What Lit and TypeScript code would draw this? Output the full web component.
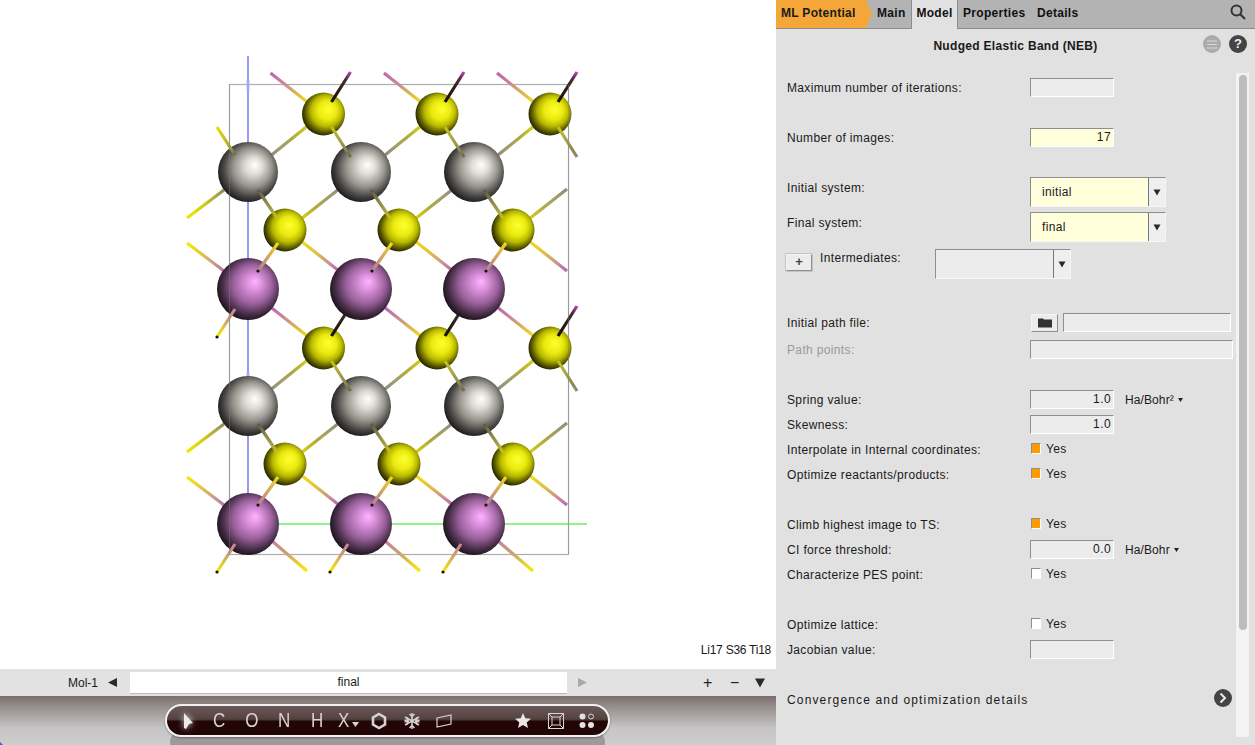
import { LitElement, html, css, svg } from "lit";
import { customElement } from "lit/decorators.js";

type Pt = [number, number];
type Bond = { a: Pt; b: Pt; stops: string[]; dot?: boolean };

const Y_P = ["#f0e010", "#e0c040", "#c89090", "#c060b8"];
const P_Y = ["#c87fa0", "#c8a070", "#e8d030", "#f5ea00"];
const OLIVE = ["#d8d010", "#b0aa40", "#a09c70", "#8f8c78"];
const OLIVE_IN = ["#c8c018", "#a8a448", "#8c8850", "#6a6848"];
const DARK = ["#14100a", "#2a1c10", "#4a2c30", "#c040c0"];

const cols = [0, 1, 2];
const rows = [0, 1];
const atomX = (i: number) => 248 + 113 * i;
const ax = (i: number) => [323.5, 437, 550][i];
const bx = (i: number) => [285, 399, 513][i];
const ay = (j: number) => [114, 348][j];
const by = (j: number) => [230, 464][j];
const gy = (j: number) => [172, 406][j];
const py = (j: number) => [289, 524][j];

const off = (p: Pt, dx: number, dy: number): Pt => [p[0] + dx, p[1] + dy];

function backBonds(): Bond[] {
  const out: Bond[] = [];
  for (const j of rows) {
    out.push({ a: [187, by(j) - 12], b: [224, by(j) - 40], stops: ["#f0e800", "#d8d010", "#b0aa40", "#8f8c60"] });
    out.push({ a: [187, by(j) + 13], b: [224, by(j) + 41], stops: ["#f5ea00", "#e0c840", "#c89890", "#b87898"] });
    for (const i of cols) {
      const A: Pt = [ax(i), ay(j)];
      const B: Pt = [bx(i), by(j)];
      out.push({ a: off(A, -53, -41), b: off(A, -15, -11), stops: [...Y_P].reverse() });
      out.push({ a: off(A, -16, 12), b: off(A, -52, 41), stops: OLIVE });
      out.push({ a: off(B, 16, -11), b: off(B, 54, -41), stops: OLIVE });
      out.push({ a: off(B, 16, 11), b: off(B, 54, 41), stops: Y_P });
    }
  }
  for (const i of cols) {
    const P: Pt = [atomX(i), py(1)];
    out.push({ a: off(P, 24, 17), b: off(P, 59, 47), stops: P_Y });
  }
  return out;
}

function overYellow(): Bond[] {
  const out: Bond[] = [];
  for (const j of rows) {
    for (const i of cols) {
      const A: Pt = [ax(i), ay(j)];
      out.push({ a: off(A, 8, -12), b: off(A, 27, -42), stops: DARK });
    }
  }
  return out;
}

function frontBonds(): Bond[] {
  const out: Bond[] = [];
  out.push({ a: [217, 127], b: [235, 155], stops: ["#e8e000", "#c8c020", "#a0a040", "#6a6848"] });
  for (const j of rows) {
    for (const i of cols) {
      const A: Pt = [ax(i), ay(j)];
      const B: Pt = [bx(i), by(j)];
      const G: Pt = [atomX(i), gy(j)];
      out.push({ a: off(A, 8, 13), b: off(A, 27, 43), stops: OLIVE_IN.map((c, k) => (i === 2 && k === 3 ? "#8f8c78" : c)) });
      out.push({ a: off(G, 10, 18), b: off(G, 29, 46), stops: ["#5a5840", "#8a8650", "#a8a440", "#c8c018"] });
      out.push({ a: off(B, -7, 13), b: off(B, -27, 41), stops: ["#f0d820", "#d8b050", "#c09080", "#b87f98"], dot: true });
    }
  }
  out.push({ a: [235, 309], b: [217, 337], stops: P_Y, dot: true });
  for (const i of cols) {
    const P: Pt = [atomX(i), py(1)];
    out.push({ a: off(P, -13, 20), b: off(P, -31, 48), stops: P_Y, dot: true });
  }
  return out;
}

let gid = 0;
function bondSvg(list: Bond[]) {
  return list.map((b) => {
    const id = `bd${gid++}`;
    return svg`
      <linearGradient id=${id} gradientUnits="userSpaceOnUse" x1=${b.a[0]} y1=${b.a[1]} x2=${b.b[0]} y2=${b.b[1]}>
        <stop offset="0" stop-color=${b.stops[0]}></stop>
        <stop offset=".4" stop-color=${b.stops[1]}></stop>
        <stop offset=".75" stop-color=${b.stops[2]}></stop>
        <stop offset="1" stop-color=${b.stops[3]}></stop>
      </linearGradient>
      <line x1=${b.a[0]} y1=${b.a[1]} x2=${b.b[0]} y2=${b.b[1]} stroke=${`url(#${id})`} stroke-width="3.2"></line>
      ${b.dot ? svg`<circle cx=${b.b[0]} cy=${b.b[1]} r="1.6" fill="#1a1210"></circle>` : null}
    `;
  });
}

function molecule() {
  gid = 0;
  const yellows: Pt[] = [];
  const greys: Pt[] = [];
  const purples: Pt[] = [];
  for (const j of rows) {
    for (const i of cols) {
      yellows.push([ax(i), ay(j)], [bx(i), by(j)]);
      greys.push([atomX(i), gy(j)]);
      purples.push([atomX(i), py(j)]);
    }
  }
  return html`<svg class="mol" width="776" height="669" viewBox="0 0 776 669">
    <defs>
      <radialGradient id="gy" cx=".54" cy=".46" r=".58" fx=".62" fy=".38">
        <stop offset="0" stop-color="#ffff30"></stop>
        <stop offset=".38" stop-color="#eaea10"></stop>
        <stop offset=".62" stop-color="#b8b800"></stop>
        <stop offset=".82" stop-color="#5c5c00"></stop>
        <stop offset="1" stop-color="#121200"></stop>
      </radialGradient>
      <radialGradient id="gg" cx=".54" cy=".46" r=".58" fx=".62" fy=".38">
        <stop offset="0" stop-color="#fffffb"></stop>
        <stop offset=".25" stop-color="#dedbd6"></stop>
        <stop offset=".55" stop-color="#98958f"></stop>
        <stop offset=".8" stop-color="#484644"></stop>
        <stop offset="1" stop-color="#121212"></stop>
      </radialGradient>
      <radialGradient id="gp" cx=".54" cy=".46" r=".58" fx=".62" fy=".38">
        <stop offset="0" stop-color="#ffb4ff"></stop>
        <stop offset=".25" stop-color="#d68cd6"></stop>
        <stop offset=".55" stop-color="#98609a"></stop>
        <stop offset=".8" stop-color="#482e48"></stop>
        <stop offset="1" stop-color="#100c10"></stop>
      </radialGradient>
    </defs>
    <rect class="cell" x="229.5" y="84.5" width="339" height="470"></rect>
    <line class="axis-z" x1="248" y1="56" x2="248" y2="524"></line>
    <line class="axis-glow" x1="248" y1="80" x2="248" y2="90"></line>
    <line class="axis-glow" x1="248" y1="372" x2="248" y2="382"></line>
    <line class="axis-y" x1="248" y1="524" x2="587" y2="524"></line>
    ${bondSvg(backBonds())}
    ${yellows.map((p) => svg`<circle cx=${p[0]} cy=${p[1]} r="21.5" fill="url(#gy)"></circle>`)}
    ${bondSvg(overYellow())}
    ${greys.map((p) => svg`<circle cx=${p[0]} cy=${p[1]} r="30" fill="url(#gg)"></circle>`)}
    ${purples.map((p) => svg`<circle cx=${p[0]} cy=${p[1]} r="31" fill="url(#gp)"></circle>`)}
    ${bondSvg(frontBonds())}
    <line class="cell-over" x1="229.5" y1="84.5" x2="229.5" y2="554"></line>
    <line class="cell-over" x1="568.5" y1="84.5" x2="568.5" y2="554"></line>
  </svg>`;
}

const arrowDown = html`<svg class="tri" width="8" height="7" viewBox="0 0 8 7"><path d="M.5 .5h7L4 6.500z"></path></svg>`;

@customElement("app-root")
export class AppRoot extends LitElement {
  static styles = css`
    :host {
      display: flex;
      width: 1255px;
      height: 745px;
      overflow: hidden;
      font-family: "Liberation Sans", Arial, sans-serif;
      font-size: 12px;
      color: #1a1a1a;
    }
    .left {
      width: 776px;
      display: flex;
      flex-direction: column;
    }
    .canvas {
      position: relative;
      height: 669px;
      background: #fff;
    }
    .mol {
      display: block;
    }
    .cell {
      fill: none;
      stroke: #adadad;
      stroke-width: 1.2;
    }
    .cell-over {
      stroke: #808080;
      stroke-width: 1;
      opacity: 0.4;
    }
    .axis-z {
      stroke: #6e6ef0;
      stroke-width: 1.4;
    }
    .axis-glow {
      stroke: #b8b8f8;
      stroke-width: 4;
      opacity: 0.5;
    }
    .axis-y {
      stroke: #66f066;
      stroke-width: 1.4;
    }
    .formula {
      position: absolute;
      right: 5px;
      bottom: 12px;
      font-size: 12px;
      letter-spacing: -0.25px;
    }
    .molbar {
      height: 27px;
      background: #e2e2e2;
      display: flex;
      align-items: center;
    }
    .molname {
      margin-left: 68px;
      width: 40px;
    }
    .tri {
      display: block;
      fill: #2a2a2a;
    }
    .prev {
      width: 22px;
    }
    .molinput {
      width: 437px;
      height: 22px;
      box-sizing: border-box;
      background: #fff;
      border-bottom: 1px solid #b8b8b8;
      display: flex;
      align-items: center;
      justify-content: center;
    }
    .next {
      margin-left: 11px;
      width: 125px;
      fill: #a8a8a8;
    }
    .plusminus {
      width: 27px;
      font-size: 16px;
      color: #222;
    }
    .plusminus.last {
      width: 25px;
    }
    .toolbar {
      position: relative;
      flex: 1;
      background: linear-gradient(#7a6e6c 0, #989290 12px, #c6c4c4 32px, #cfcfcf 49px);
      display: flex;
      justify-content: flex-start;
    }
    .shade {
      position: absolute;
      left: 170px;
      bottom: -8px;
      width: 435px;
      height: 22px;
      border-radius: 12px;
      background: #9c9a9a;
    }
    .corner {
      position: absolute;
      left: 0;
      bottom: 0;
      width: 3px;
      height: 3px;
      background: #3a62c8;
      clip-path: polygon(0 0, 100% 100%, 0 100%);
    }
    .pill {
      position: relative;
      margin: 8px 0 0 165px;
      width: 445px;
      height: 33px;
      box-sizing: border-box;
      border: 2px solid #f2f0f0;
      border-radius: 17px;
      box-shadow: 0 1px 2px rgba(0, 0, 0, 0.35);
      background: linear-gradient(#6a5a58 0, #54423f 13px, #4a3634 14px, #220605 15px, #220605 100%);
      display: grid;
      grid-template-columns: 31px 32px 33px 32px 34px 28px 34px 32px 32px 47px 32px 33px 30px;
      padding-left: 5px;
      align-items: center;
      justify-items: center;
      color: #d9d2d2;
      font-size: 20px;
      line-height: 29px;
    }
    .pill svg {
      display: block;
      fill: none;
      stroke: #d9d2d2;
    }
    .pill .cursor {
      fill: #efeaea;
      stroke: none;
      filter: drop-shadow(0 0 3px rgba(255, 255, 255, 0.8));
    }
    .sym {
      display: block;
      transform: scaleX(0.85);
    }
    .xsym {
      display: flex;
      align-items: flex-end;
      gap: 1px;
    }
    .xsym svg {
      fill: #d9d2d2;
      stroke: none;
      margin-bottom: 8px;
    }

    .panel {
      width: 479px;
      background: #e1e1e1;
      display: flex;
      flex-direction: column;
      letter-spacing: 0.35px;
    }
    .tabs {
      height: 29px;
      box-sizing: border-box;
      background: #b3b3b3;
      border-bottom: 1px solid #8c8c8c;
      display: flex;
      font-weight: bold;
      font-size: 12px;
      letter-spacing: 0.3px;
      align-items: stretch;
    }
    .ml {
      width: 96px;
      height: 28px;
      background: #f4a638;
      clip-path: polygon(0 0, 90px 0, 96px 14px, 90px 28px, 0 28px);
      padding-left: 5px;
      box-sizing: border-box;
      line-height: 26px;
    }
    .tab {
      line-height: 26px;
      color: #111;
    }
    .tab.main {
      margin-left: 5px;
      width: 34px;
    }
    .tab.model {
      width: 47px;
      height: 29px;
      box-sizing: border-box;
      background: #e1e1e1;
      border-left: 1px solid #8c8c8c;
      border-right: 1px solid #8c8c8c;
      text-align: center;
    }
    .tab.props {
      margin-left: 5px;
      width: 74px;
    }
    .search {
      margin: 3px 8px 0 auto;
      display: block;
      fill: none;
      stroke: #333;
    }
    .title {
      height: 44px;
      box-sizing: border-box;
      position: relative;
      font-weight: bold;
      text-align: center;
      line-height: 34px;
      letter-spacing: 0.3px;
    }
    .round {
      position: absolute;
      top: 6px;
      width: 18px;
      height: 18px;
      border-radius: 50%;
      display: flex;
      align-items: center;
      justify-content: center;
      color: #eee;
    }
    .round.menu {
      left: 427px;
      background: #ababab;
    }
    .round.help {
      left: 453px;
      background: #444;
      font-size: 13px;
      font-weight: bold;
    }
    .round svg {
      display: block;
    }
    .body {
      flex: 1;
      display: flex;
      min-height: 0;
    }
    .form {
      width: 460px;
      box-sizing: border-box;
      padding: 2px 4px 0 11px;
    }
    .track {
      width: 13px;
      margin-bottom: 8px;
      background: #f3f3f3;
      padding: 2px 2px 0 3px;
      box-sizing: border-box;
    }
    .thumb {
      height: 555px;
      background: #bcbcbc;
      border-radius: 4px;
    }
    .row {
      height: 25px;
      display: flex;
      align-items: center;
    }
    .row.tall {
      height: 35px;
      align-items: flex-start;
    }
    .row.pts {
      height: 27px;
      padding-top: 2px;
      box-sizing: border-box;
    }
    .gap {
      height: 25px;
    }
    .gap.wide {
      height: 30px;
    }
    .lab {
      width: 243px;
      flex: none;
    }
    .tall .lab {
      line-height: 26px;
    }
    .lab.off {
      color: #999;
    }
    .inp {
      width: 84px;
      height: 19px;
      box-sizing: border-box;
      flex: none;
      background: #ececec;
      border: 1px solid;
      border-color: #8e8e8e #fff #fff #8e8e8e;
      text-align: right;
      padding-right: 2px;
      line-height: 16px;
      font-size: 12px;
      letter-spacing: 0.4px;
    }
    .inp.req {
      background: #ffffdc;
    }
    .inp.wide {
      width: 203px;
    }
    .inp.file {
      width: 168px;
      margin-left: 5px;
    }
    .unit {
      margin-left: 11px;
      display: flex;
      align-items: center;
      gap: 4px;
      letter-spacing: 0.1px;
    }
    .unit svg {
      display: block;
      fill: #222;
    }
    .combo {
      width: 136px;
      height: 30px;
      margin-top: 2px;
      box-sizing: border-box;
      border: 1px solid;
      border-color: #8e8e8e #f6f6f6 #f6f6f6 #8e8e8e;
      background: #ffffdc;
      display: flex;
      flex: none;
      align-items: center;
    }
    .combo.empty {
      background: #ececec;
      margin: 4px 0 0 0;
    }
    .combo span {
      flex: 1;
      padding-left: 11px;
    }
    .drop {
      width: 17px;
      height: 28px;
      box-sizing: border-box;
      border-left: 1px solid #777;
      background: #efefef;
      display: flex;
      align-items: center;
      justify-content: center;
    }
    .add {
      width: 26px;
      height: 17px;
      margin: 9px 8px 0 -1px;
      box-sizing: border-box;
      background: #ececec;
      border: 1px solid;
      border-color: #f4f4f4 #8e8e8e #8e8e8e #f4f4f4;
      box-shadow: 0 0 0 0.5px #aaa;
      font-size: 13px;
      font-weight: bold;
      line-height: 13px;
      text-align: center;
      flex: none;
      letter-spacing: 0;
      color: #444;
    }
    .tall .lab.short {
      width: 115px;
      line-height: 25px;
      margin-top: 1px;
    }
    .folder {
      width: 27px;
      height: 18px;
      margin-left: 1px;
      box-sizing: border-box;
      background: #ececec;
      border: 1px solid;
      border-color: #f4f4f4 #8e8e8e #8e8e8e #f4f4f4;
      display: flex;
      align-items: center;
      justify-content: center;
      flex: none;
    }
    .folder svg {
      display: block;
      fill: #333;
    }
    .check {
      width: 10px;
      height: 11px;
      box-sizing: border-box;
      margin: 0 5px 0 1px;
      border: 1px solid;
      border-color: #8e8e8e #fff #fff #8e8e8e;
      background: #fff;
      flex: none;
    }
    .check.on {
      background: #ff9a00;
    }
    .yes {
      margin-top: -2px;
      display: flex;
      align-items: center;
    }
    .more {
      justify-content: space-between;
    }
    .more-label {
      letter-spacing: 1.15px;
    }
    .round-next {
      width: 18px;
      height: 18px;
      border-radius: 50%;
      background: #444;
      display: flex;
      align-items: center;
      justify-content: center;
      margin-top: -3px;
    }
    .round-next svg {
      display: block;
      fill: none;
      stroke: #eee;
    }
  `;

  private input(label: string, value = "", req = false, unit = "") {
    return html`<div class="row">
      <div class="lab">${label}</div>
      <div class="inp ${req ? "req" : ""}">${value}</div>
      ${unit
        ? html`<div class="unit">
            ${unit}<svg width="5" height="4" viewBox="0 0 5 4"><path d="M0 0h5L2.5 4z"></path></svg>
          </div>`
        : null}
    </div>`;
  }

  private checkRow(label: string, on: boolean) {
    return html`<div class="row">
      <div class="lab">${label}</div>
      <div class="yes"><div class="check ${on ? "on" : ""}"></div>Yes</div>
    </div>`;
  }

  private comboRow(label: string, value: string) {
    return html`<div class="row tall">
      <div class="lab">${label}</div>
      <div class="combo"><span>${value}</span><div class="drop">${arrowDown}</div></div>
    </div>`;
  }

  private toolbar() {
    return html`<div class="toolbar">
      <div class="shade"></div>
      <div class="corner"></div>
      <div class="pill">
        <svg class="cursor" width="14" height="18" viewBox="0 0 14 18"><path d="M3 1l9 10-4 1-3 5-2-1z"></path></svg>
        <span class="sym">C</span>
        <span class="sym">O</span>
        <span class="sym">N</span>
        <span class="sym">H</span>
        <div class="xsym">
          <span class="sym">X</span>
          <svg width="7" height="5" viewBox="0 0 7 5"><path d="M0 0h7L3.5 5z"></path></svg>
        </div>
        <svg width="16" height="18" viewBox="0 0 16 18"><path d="M8 2l6 3.5v7L8 16l-6-3.500v-7z" stroke-width="2.6"></path></svg>
        <svg width="18" height="18" viewBox="0 0 18 18" stroke-width="1.5">
          <path d="M9 1v16M2 5l14 8M16 5L2 13"></path>
          <path d="M6.500 2L9 4.500 11.500 2M6.500 16L9 13.500 11.500 16M1.500 8l3.500 1-1-3.500M16.500 10l-3.500-1 1 3.500M14 5.500l-1 3.500 3.500-1M4 12.500l1-3.500-3.500 1"></path>
        </svg>
        <svg width="18" height="14" viewBox="0 0 18 14" stroke-width="1.2"><path d="M2 4l14-3v9L2 13z"></path></svg>
        <span></span>
        <svg width="16" height="15" viewBox="0 0 16 15"><path d="M8 0l2.300 5.200 5.700.5-4.300 3.700 1.300 5.600L8 12.100 3 15l1.300-5.600L0 5.700l5.700-.5z" fill="#ece6e6" stroke="none"></path></svg>
        <svg width="18" height="18" viewBox="0 0 18 18" stroke-width="1">
          <path d="M1.500 1.500h15v15h-15zM5 5h8v8H5zM1.500 1.500L5 5M16.500 1.500L13 5M1.500 16.500L5 13M16.500 16.500L13 13"></path>
        </svg>
        <svg width="16" height="16" viewBox="0 0 16 16">
          <circle cx="3.500" cy="3.500" r="3" fill="#e6e0e0" stroke="none"></circle>
          <circle cx="12" cy="3.500" r="2.500" stroke-width="1"></circle>
          <circle cx="3.500" cy="12" r="3" fill="#e6e0e0" stroke="none"></circle>
          <circle cx="12" cy="12" r="3" fill="#e6e0e0" stroke="none"></circle>
        </svg>
      </div>
    </div>`;
  }

  render() {
    return html`
      <div class="left">
        <div class="canvas">
          ${molecule()}
          <div class="formula">Li17 S36 Ti18</div>
        </div>
        <div class="molbar">
          <div class="molname">Mol-1</div>
          <div class="prev"><svg class="tri" width="9" height="9" viewBox="0 0 9 9"><path d="M9 0v9L0 4.500z"></path></svg></div>
          <div class="molinput">final</div>
          <div class="next"><svg class="tri" style="fill:inherit" width="9" height="9" viewBox="0 0 9 9"><path d="M0 0v9l9-4.500z"></path></svg></div>
          <div class="plusminus">+</div>
          <div class="plusminus last">−</div>
          <svg class="tri" width="10" height="10" viewBox="0 0 10 10"><path d="M0 .5h10L5 9.500z"></path></svg>
        </div>
        ${this.toolbar()}
      </div>
      <div class="panel">
        <div class="tabs">
          <div class="ml">ML Potential</div>
          <div class="tab main">Main</div>
          <div class="tab model">Model</div>
          <div class="tab props">Properties</div>
          <div class="tab">Details</div>
          <svg class="search" width="18" height="18" viewBox="0 0 18 18" stroke-width="2"><circle cx="7.500" cy="7.500" r="5"></circle><path d="M11.200 11.200L16 16"></path></svg>
        </div>
        <div class="title">
          Nudged Elastic Band (NEB)
          <div class="round menu">
            <svg width="10" height="9" viewBox="0 0 10 9" stroke="#d8d8d8" stroke-width="1"><path d="M0 1h10M0 4.500h10M0 8h10"></path></svg>
          </div>
          <div class="round help">?</div>
        </div>
        <div class="body">
          <div class="form">
            ${this.input("Maximum number of iterations:")}
            <div class="gap"></div>
            ${this.input("Number of images:", "17", true)}
            <div class="gap"></div>
            ${this.comboRow("Initial system:", "initial")}
            ${this.comboRow("Final system:", "final")}
            <div class="row tall">
              <div class="add">+</div>
              <div class="lab short">Intermediates:</div>
              <div class="combo empty"><span></span><div class="drop">${arrowDown}</div></div>
            </div>
            <div class="gap wide"></div>
            <div class="row">
              <div class="lab">Initial path file:</div>
              <div class="folder">
                <svg width="16" height="11" viewBox="0 0 16 11"><path d="M1 2.500V1.500h5l1 1h8v8H1z"></path></svg>
              </div>
              <div class="inp file"></div>
            </div>
            <div class="row pts">
              <div class="lab off">Path points:</div>
              <div class="inp wide"></div>
            </div>
            <div class="gap"></div>
            ${this.input("Spring value:", "1.0", false, "Ha/Bohr²")}
            ${this.input("Skewness:", "1.0")}
            ${this.checkRow("Interpolate in Internal coordinates:", true)}
            ${this.checkRow("Optimize reactants/products:", true)}
            <div class="gap"></div>
            ${this.checkRow("Climb highest image to TS:", true)}
            ${this.input("CI force threshold:", "0.0", false, "Ha/Bohr")}
            ${this.checkRow("Characterize PES point:", false)}
            <div class="gap"></div>
            ${this.checkRow("Optimize lattice:", false)}
            ${this.input("Jacobian value:")}
            <div class="gap"></div>
            <div class="row more">
              <div class="more-label">Convergence and optimization details</div>
              <div class="round-next">
                <svg width="8" height="12" viewBox="0 0 8 12" stroke-width="2"><path d="M1.500 1.500L6 6l-4.500 4.500"></path></svg>
              </div>
            </div>
          </div>
          <div class="track"><div class="thumb"></div></div>
        </div>
      </div>
    `;
  }
}
